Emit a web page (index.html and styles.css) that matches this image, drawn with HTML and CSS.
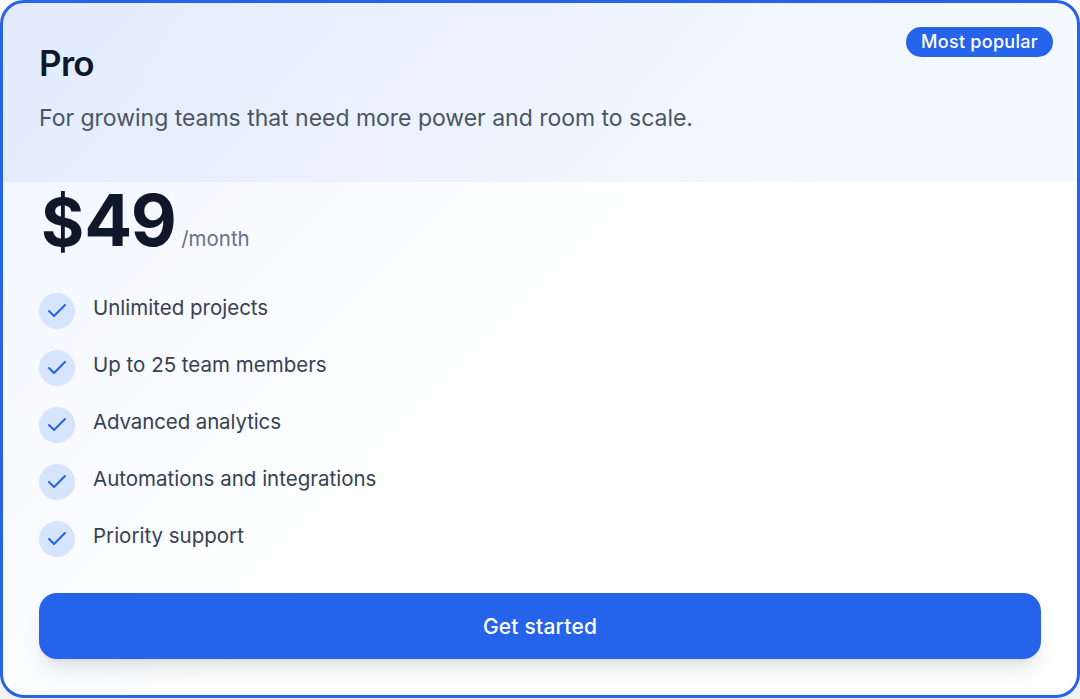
FILE: index.html
```html
<!DOCTYPE html>
<html lang="en">
<head>
  <meta charset="UTF-8">
  <meta name="viewport" content="width=device-width, initial-scale=1.0">
  <title>Pro plan</title>
  <link rel="stylesheet" href="styles.css">
</head>
<body>

<div class="card">
  <span class="badge">Most popular</span>

  <div class="card-header">
    <h2>Pro</h2>
    <p>For growing teams that need more power and room to scale.</p>
  </div>

  <div class="card-content">
    <div class="price">
      <span class="amount"><span class="currency">$</span>49</span>
      <span class="period">/month</span>
    </div>

    <ul class="features">
      <li><span class="check"><svg viewBox="0 0 24 24"><path d="M20 6 9 17l-5-5"/></svg></span><span class="feature">Unlimited projects</span></li>
      <li><span class="check"><svg viewBox="0 0 24 24"><path d="M20 6 9 17l-5-5"/></svg></span><span class="feature">Up to 25 team members</span></li>
      <li><span class="check"><svg viewBox="0 0 24 24"><path d="M20 6 9 17l-5-5"/></svg></span><span class="feature tight">Advanced analytics</span></li>
      <li><span class="check"><svg viewBox="0 0 24 24"><path d="M20 6 9 17l-5-5"/></svg></span><span class="feature">Automations and integrations</span></li>
      <li><span class="check"><svg viewBox="0 0 24 24"><path d="M20 6 9 17l-5-5"/></svg></span><span class="feature">Priority support</span></li>
    </ul>
  </div>

  <div class="card-footer">
    <button class="button">Get started</button>
  </div>
</div>

</body>
</html>
```
FILE: styles.css
```css
* {
  box-sizing: border-box;
}
body {
  margin: 0;
  height: 699px;
  overflow: hidden;
  background: linear-gradient(to bottom, #fff 70%, #f1f1f2);
  font-family: Inter, "Liberation Sans", sans-serif;
}
.card {
  position: relative;
  display: flex;
  flex-direction: column;
  height: 698px;
  border: 3px solid #2563eb;
  border-radius: 24px;
  overflow: hidden;
  background: linear-gradient(135deg, #eff4ff 0%, #fff 50%) #fff;
}
.badge {
  position: absolute;
  top: 23.5px;
  right: 24px;
  height: 30px;
  padding: 0 15px;
  border-radius: 15px;
  background: #2563eb;
  color: #fff;
  font-size: 18px;
  font-weight: 500;
  line-height: 30px;
  letter-spacing: 0.28px;
}
.card-header {
  height: 179px;
  padding: 36px;
  background: linear-gradient(to right, rgba(37, 110, 235, 0.065), rgba(50, 150, 246, 0.06));
}
h2 {
  margin: 0;
  color: #0f172a;
  font-size: 35px;
  font-weight: 600;
  line-height: 48px;
  letter-spacing: -0.7px;
}
.card-header p {
  margin: 13px 0 0;
  color: #4b5563;
  font-size: 23px;
  line-height: 36px;
  letter-spacing: -0.02px;
}
.card-content {
  padding: 0 36px;
}
.price {
  display: flex;
  align-items: baseline;
  gap: 6px;
  color: #0f172a;
}
.amount {
  padding-left: 2px;
  font-size: 71px;
  font-weight: 700;
  line-height: 76px;
  letter-spacing: -1.6px;
}
.currency {
  font-size: 66px;
  letter-spacing: 0;
}
.period {
  color: #6b7280;
  font-size: 20.5px;
}
.features {
  display: flex;
  flex-direction: column;
  gap: 21px;
  margin: 33px 0 0;
  padding: 0;
  list-style: none;
}
.features li {
  display: flex;
  align-items: flex-start;
  gap: 18px;
}
.check {
  display: flex;
  align-items: center;
  justify-content: center;
  width: 36px;
  height: 36px;
  border-radius: 50%;
  background: #d6e5fd;
}
.check svg {
  width: 24px;
  height: 24px;
  fill: none;
  stroke: #2563eb;
  stroke-width: 2;
  stroke-linecap: round;
  stroke-linejoin: round;
}
.feature {
  color: #374151;
  font-size: 20.5px;
  line-height: 30px;
}
.feature.tight {
  letter-spacing: -0.12px;
}
.card-footer {
  margin-top: auto;
  padding: 0 36px 36px;
}
.button {
  display: block;
  width: 100%;
  height: 66px;
  border: none;
  border-radius: 18px;
  background: #2563eb;
  box-shadow: 0 15px 22px -4px rgba(0, 0, 0, 0.1), 0 6px 9px -6px rgba(0, 0, 0, 0.1);
  color: #fff;
  font-family: inherit;
  font-size: 21px;
  font-weight: 500;
  letter-spacing: 0.2px;
  cursor: pointer;
}
```
